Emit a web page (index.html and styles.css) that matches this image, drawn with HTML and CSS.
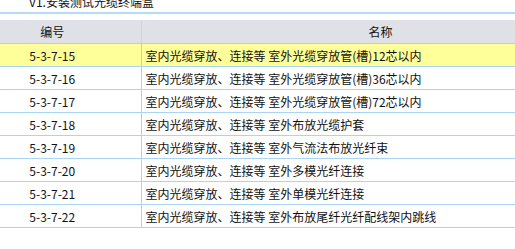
FILE: index.html
```html
<!DOCTYPE html>
<html lang="zh-CN">
<head>
<meta charset="utf-8">
<link rel="stylesheet" href="styles.css">
</head>
<body>
<div class="page">
  <div class="title">V1.安装测试光缆终端盒</div>
  <table class="grid">
    <colgroup><col class="c-code"><col class="c-name"></colgroup>
    <thead>
      <tr><th>编号</th><th>名称</th></tr>
    </thead>
    <tbody>
      <tr class="sel"><td class="code">5-3-7-15</td><td class="name">室内光缆穿放、连接等 室外光缆穿放管(槽)12芯以内</td></tr>
      <tr><td class="code">5-3-7-16</td><td class="name">室内光缆穿放、连接等 室外光缆穿放管(槽)36芯以内</td></tr>
      <tr><td class="code">5-3-7-17</td><td class="name">室内光缆穿放、连接等 室外光缆穿放管(槽)72芯以内</td></tr>
      <tr><td class="code">5-3-7-18</td><td class="name">室内光缆穿放、连接等 室外布放光缆护套</td></tr>
      <tr><td class="code">5-3-7-19</td><td class="name">室内光缆穿放、连接等 室外气流法布放光纤束</td></tr>
      <tr><td class="code">5-3-7-20</td><td class="name">室内光缆穿放、连接等 室外多模光纤连接</td></tr>
      <tr><td class="code">5-3-7-21</td><td class="name">室内光缆穿放、连接等 室外单模光纤连接</td></tr>
      <tr><td class="code">5-3-7-22</td><td class="name">室内光缆穿放、连接等 室外布放尾纤光纤配线架内跳线</td></tr>
    </tbody>
  </table>
</div>
</body>
</html>
```
FILE: styles.css
```css
html, body {
  margin: 0;
  padding: 0;
  background: #ffffff;
  overflow: hidden;
}
.page {
  width: 515px;
  height: 249px;
  overflow: hidden;
  font-family: "Noto Sans CJK SC", "Noto Sans", sans-serif;
  font-size: 12px;
  color: #111111;
}
.title {
  margin-top: -6px;
  height: 18px;
  line-height: 16px;
  padding-left: 29px;
  border-bottom: 2px solid #b3daf8;
  margin-bottom: 6px;
}
.grid {
  border-collapse: collapse;
  table-layout: fixed;
  width: 656px;
  margin-left: -36px;
}
.c-code { width: 177px; }
.c-name { width: 479px; }
.grid th {
  background: #dfe1e6;
  font-weight: normal;
  height: 23px;
  padding: 0;
  text-align: center;
  border-bottom: 1px solid #a9d4f6;
  border-right: 1px solid #c4d6e6;
}
.grid td {
  height: 22px;
  padding: 0;
  border-bottom: 1px solid #a9d4f6;
  border-right: 1px solid #a9d4f6;
  white-space: nowrap;
}
.grid td.code {
  text-align: center;
}
.grid td.name {
  padding-left: 4px;
}
.grid tr.sel td {
  background: #ffff99;
}
```
